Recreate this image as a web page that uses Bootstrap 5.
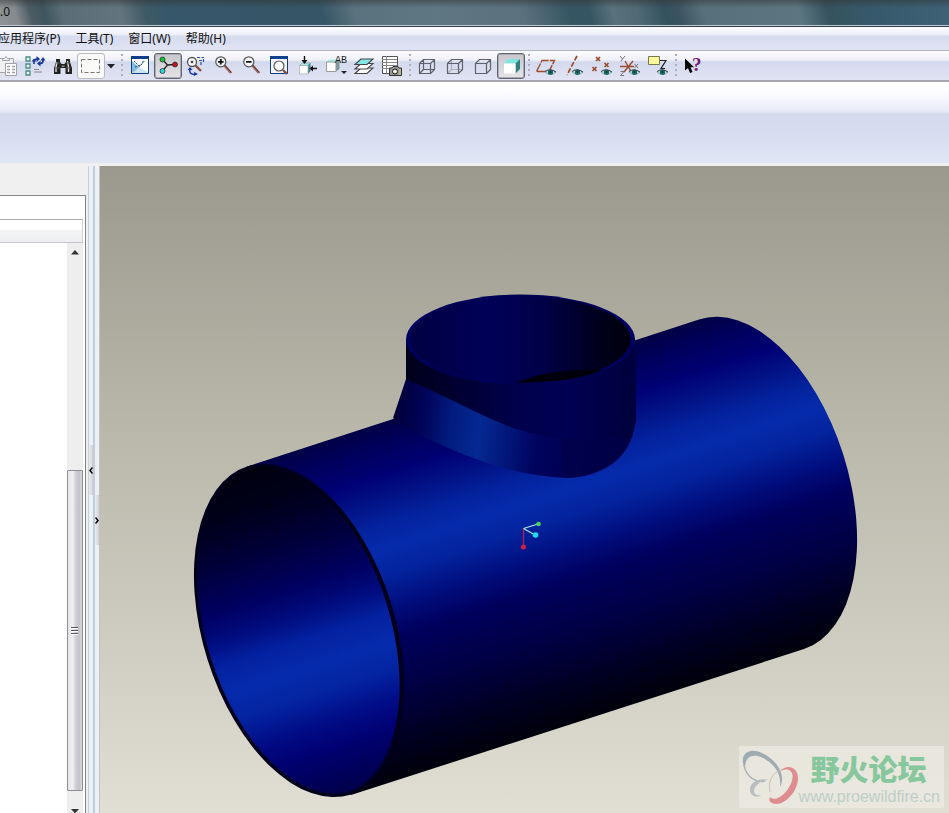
<!DOCTYPE html>
<html lang="zh-CN">
<head>
<meta charset="utf-8">
<meta name="viewport" content="width=device-width, initial-scale=1">
<title>Pro/ENGINEER Wildfire 5.0</title>
<link rel="stylesheet" href="https://cdn.jsdelivr.net/npm/bootstrap@5.3.0/dist/css/bootstrap.min.css">
<style>
body{font-family:"Noto Sans","Noto Sans CJK SC",sans-serif;font-size:12px;line-height:16px;color:#111;background:#f0f0f0}
.title-strip{height:27px;line-height:24px;border-bottom:1px solid #2c3c4c;box-shadow:inset 0 -1px #c4ccd4;
 background:linear-gradient(180deg,rgba(50,50,50,.5),transparent 30%),linear-gradient(75deg,#8f9396 0,#858a8e 2%,#4d5c64 3.500%,#3d555e 5%,#5a6e77 7%,#62757e 13%,#3f5a66 15.500%,#36566a 18%,#365566 34%,#5a727e 37.500%,#5f7783 46%,#5b717d 55%,#365562 60%,#365562 62%,#58717c 64.500%,#4f6a74 67%,#33515e 70%,#3c5560 71.500%,#57707b 74%,#5b7680 84%,#36535e 87%,#365a6c 92%,#3f6276 100%)}
.menu-strip{height:24px;border-bottom:1px solid #b2b4be;background:linear-gradient(180deg,#fdfdfe,#eceef7 8px,#d5dcee 9px,#e0e3f3)}
.menu-strip .nav{gap:1px}
.menu-strip .nav-link{padding:4px 7px;color:#111}
.menu-strip .nav-item:first-child{margin-left:-9px}
.tool-strip{height:31px;padding-top:2px;border-bottom:2px solid #a5a6ae;background:linear-gradient(180deg,#fcfcfe,#eff0f8 9px,#d3d9ed 11px,#e2e4f4)}
.tool-btn{width:28px;height:26px;padding:0;border:0;background:none;flex:none;display:block;overflow:hidden;border-radius:3px}
.tool-btn svg{display:block;width:28px;height:26px}
.tool-btn.cut-btn{width:21px;direction:rtl}
.tool-btn.pressed{border:1px solid #62646d;box-shadow:inset 0 0 0 1px #a9abb4;background:linear-gradient(#c8c8cc,#e4e4e8)}
.tool-btn.pressed svg,.tool-btn.boxed svg{margin:-1px}
.tool-btn.boxed{border:1px solid #bcbcc0;background:#fafaf8}
.caret-btn{width:12px}
.caret-btn svg{width:12px}
.grip-sep{width:2px;height:26px;margin:0 2px 0 3px;flex:none;background:linear-gradient(#a9aec2 2px,transparent 2px) 0 1px/2px 5px}
.first-sep{margin:0 3px 0 4px}
.dash-strip{height:81px;background:linear-gradient(180deg,#fff,#fbfbff 12px,#e9ebf6 28px,#e4e7f4 30px,#d4d9ed 32px,#d8def0 55px,#e1e6f5)}
.work-area{min-height:0;padding-top:3px}
.tree-pane{width:86px;margin-right:2px;padding-top:29px}
.tree-box{border-top:1px solid #858789;border-right:1px solid #7e8488;background:#fff;padding-right:2px}
.tree-filter{height:23px}
.tree-head{height:24px;border:1px solid #a9abae;border-left:0;border-right-color:#d0d2d4;border-bottom-color:#c4c5c8;background:linear-gradient(#fff 40%,#f3f4f5 50%,#eeeff1)}
.scroll-col{width:16px;background:#eee}
.scroll-btn{height:18px;padding:0;border:0;background:none;line-height:0}
.scroll-btn.end-btn{height:11px}
.scroll-thumb{flex:320 0 0;padding:0 2px 0 0;border:1px solid #8d8d92;border-radius:1px;background:linear-gradient(90deg,#e6e6e9,#f0f0f3 35%,#d0ced6 55%,#c4c2ca 80%,#dcdce0)}
.split-bar{width:7px;background:#ebf1f5;border-left:1px solid #c5d0da;border-right:2px solid #c3cdd7}
.split-end{width:5px;border:0;border-right:1px solid #c0c2c4}
.split-btn{height:50px;padding:0;border:0;background:linear-gradient(90deg,#eeeef0,#cfd0d6);line-height:0}
.model-view{min-width:0;background:linear-gradient(180deg,#9b998d,#b9b7aa 40%,#d2d0c4 78%,#e1dfd3)}
.forum-mark{right:5px;bottom:5px;height:62px;background:rgba(238,235,228,.7);padding:0 4px 0 2px}
.forum-name{font-family:"Noto Sans CJK SC",sans-serif;font-weight:900;font-size:29px;line-height:40px;color:#87c79d;padding-left:12px}
.forum-url{font-family:"Liberation Sans",sans-serif;font-size:16px;line-height:18px;color:#bccfc6}
</style>
<script src="https://cdn.jsdelivr.net/npm/bootstrap@5.3.0/dist/js/bootstrap.bundle.min.js"></script>
</head>
<body class="vh-100 overflow-hidden d-flex flex-column">
<svg width="0" height="0" class="position-absolute" aria-hidden="true">
 <symbol id="eye" viewBox="0 0 11 7"><path d="M0 3Q5 -1.500 11 3Q5.500 8 0 3Z" fill="#dfe9e9" stroke="#7c8f95" stroke-width=".8"/><circle cx="5.500" cy="3.300" r="2.700" fill="#177068"/><circle cx="5.500" cy="3" r="1" fill="#033"/><path d="M0 2.500Q5 -1 11 3" fill="none" stroke="#345"/></symbol>
</svg>
<header class="title-strip flex-shrink-0">.0</header>
<nav class="menu-strip flex-shrink-0">
 <ul class="nav flex-nowrap">
  <li class="nav-item"><a class="nav-link" href="#">应用程序(P)</a></li>
  <li class="nav-item"><a class="nav-link" href="#">工具(T)</a></li>
  <li class="nav-item"><a class="nav-link" href="#">窗口(W)</a></li>
  <li class="nav-item"><a class="nav-link" href="#">帮助(H)</a></li>
 </ul>
</nav>
<div class="tool-strip d-flex flex-shrink-0" role="toolbar" aria-label="工具栏">
 <button class="tool-btn cut-btn" aria-label="粘贴"><svg viewBox="0 0 28 26" fill="#f0f0f2" stroke="#a0a2a8"><path d="M5.500 5.500H20.500V19.500H5.500Z"/><path d="M9.500 7.500V5.500H11.500L13 3.500L14.500 5.500H16.500V7.500Z"/><path d="M12.500 10.500H23.500V22.500H12.500Z" fill="#fff"/><path d="M14 13.500H17M19 13.500H22M14 16.500H17M19 16.500H22M14 19.500H17M19 19.500H22" stroke-width="1.500"/></svg></button>
 <button class="tool-btn" aria-label="再生"><svg viewBox="0 0 28 26" fill="none"><path d="M5 4H9V8H5ZM5 11H9V15H5ZM5 18H9V22H5Z" fill="#e9f5f0" stroke="#4c8a80" stroke-width="1.300"/><path d="M13 11V8Q13.500 6 16 6M22 6V8.500Q21.500 10.500 19 10.500" stroke="#15379a" stroke-width="1.600"/><path d="M15.500 3L19 6L15.500 9ZM10.500 8.500H15.500L13 5.500ZM24.500 7.500H19.500L22 4ZM19.500 7.500V13.500L16 10.500Z" fill="#15379a"/><path d="M13 16.500H18M13 19H21" stroke="#888"/></svg></button>
 <button class="tool-btn" aria-label="查找"><svg viewBox="0 0 28 26"><path d="M7 6H11V9L12.500 11H15.500L17 9V6H21V9L23 15V21H16.500V15H11.500V21H5V15L7 9Z" fill="#222"/><path d="M8 9L7 14V19M18.500 8L19.500 14V19" fill="none" stroke="#ddd" stroke-width="1.400"/><path d="M12.500 12.500H15.500V14H12.500Z" fill="#888"/><path d="M7 10H11M17 10H21M5 15H11M17 15H22" stroke="#555"/></svg></button>
 <button class="tool-btn boxed" aria-label="选取框"><svg viewBox="0 0 28 26"><path d="M4.500 6.500H22.500V19.500H4.500Z" fill="none" stroke="#777" stroke-dasharray="4 2"/></svg></button>
 <button class="tool-btn caret-btn" aria-label="选取选项"><svg viewBox="0 0 12 26"><path d="M2 11H10L6 15.500Z" fill="#222"/></svg></button>
 <span class="grip-sep first-sep"></span>
 <button class="tool-btn" aria-label="草绘"><svg viewBox="0 0 28 26"><path d="M5.500 3.500H22.500V20.500H5.500Z" fill="#fff" stroke="#123f80"/><path d="M5 3H23V6H5Z" fill="#0d3f8c"/><path d="M6 8L13 14.500L6 20Z" fill="#80bde0"/><path d="M6 20L13 14L22 19V20Z" fill="#cae4f0"/><path d="M7 19.500L19 8" stroke="#9fb9c8"/><path d="M8 8L14 14M9 14L15 12L18 7" fill="none" stroke="#164b80" stroke-dasharray="2 1"/></svg></button>
 <button class="tool-btn pressed" aria-label="旋转中心"><svg viewBox="0 0 28 26"><path d="M8.500 6.500L13.500 12L21 11.500M13.500 12L8.500 18" fill="none" stroke="#222" stroke-width="1.300"/><g stroke="#222" stroke-width=".7"><circle cx="8.500" cy="6.500" r="2.500" fill="#16c33a"/><circle cx="21" cy="11.500" r="2.500" fill="#c5152b"/><circle cx="8.500" cy="18" r="2.500" fill="#2fd5dc"/></g></svg></button>
 <button class="tool-btn" aria-label="重定向"><svg viewBox="0 0 28 26" fill="none"><path d="M13.500 12.500L19 18" stroke="#8d4f42" stroke-width="2.400"/><circle cx="10" cy="9" r="4.500" fill="#f4f6fa" stroke="#555" stroke-width="1.300"/><circle cx="10" cy="9" r="1.300" fill="#444"/><path d="M15 4.500H22M21.500 6V9M17 7.500H20M19 9V13" stroke="#254b9e" stroke-width="1.200" stroke-dasharray="3 1.500"/><path d="M8 16Q6.500 21 12 21.500L14 20.500" stroke="#173ba0" stroke-width="1.600"/><path d="M8 14L10.500 17H5.500ZM12 19L16 21L12 23Z" fill="#173ba0"/></svg></button>
 <button class="tool-btn" aria-label="放大"><svg viewBox="0 0 28 26"><path d="M14 12L21 20" stroke="#a0645a" stroke-width="2.600"/><path d="M14.500 12L21.500 19.500" stroke="#333" stroke-width=".8"/><circle cx="10.800" cy="8.800" r="5" fill="#f6f7fa" stroke="#555" stroke-width="1.200"/><path d="M8 8.800H13.600M10.800 6V11.600" stroke="#111" stroke-width="1.800"/></svg></button>
 <button class="tool-btn" aria-label="缩小"><svg viewBox="0 0 28 26"><path d="M14 12L21 20" stroke="#a0645a" stroke-width="2.600"/><path d="M14.500 12L21.500 19.500" stroke="#333" stroke-width=".8"/><circle cx="10.800" cy="8.800" r="5" fill="#f6f7fa" stroke="#555" stroke-width="1.200"/><path d="M8 8.800H13.600" stroke="#111" stroke-width="1.800"/></svg></button>
 <button class="tool-btn" aria-label="重新调整"><svg viewBox="0 0 28 26"><path d="M4.500 4H21.500V20.500H4.500Z" fill="#f5f7fb" stroke="#123f80"/><path d="M4 3H22V6H4Z" fill="#0d3f8c"/><path d="M17 17L21 21" stroke="#8b4d42" stroke-width="2.400"/><circle cx="13" cy="13" r="5" fill="#fff" stroke="#555" stroke-width="1.200"/></svg></button>
 <button class="tool-btn" aria-label="视图定向"><svg viewBox="0 0 28 26"><path d="M5.500 12.500L8.500 10H16.500L14 12.500Z" fill="#a4ecec" stroke="#8aa"/><path d="M14 12.500L16.500 10V18L14 21Z" fill="#3f8588"/><path d="M5.500 12.500H14V21H5.500Z" fill="#fdfdfd" stroke="#aaa" stroke-width=".7"/><path d="M10.500 3V8M23 15.500H18" stroke="#111" stroke-width="1.400"/><path d="M7.500 7H13.500L10.500 11ZM19 12.500V18.500L15.500 15.500Z" fill="#111"/></svg></button>
 <button class="tool-btn" aria-label="已命名视图"><svg viewBox="0 0 28 26"><path d="M4.500 9L7.500 6.500H17.500L14 9Z" fill="#a4ecec"/><path d="M14 9L17.500 7V16L14 18.500Z" fill="#7b9999"/><path d="M4.500 9H14V18.500H4.500Z" fill="#fdfdfd" stroke="#999"/><text x="13" y="10" font-family="Liberation Mono,monospace" font-size="10" fill="#222">AB</text><path d="M19 18H25L22 21Z" fill="#222"/></svg></button>
 <button class="tool-btn" aria-label="层"><svg viewBox="0 0 28 26" stroke="#444" stroke-width="1.100"><path d="M5 20.500L11 15H23L17 20.500Z" fill="#fff"/><path d="M5 16L11 10.500H23L17 16Z" fill="#fff"/><path d="M5 11.500L11 6H23L17 11.500Z" fill="#83e7e7"/></svg></button>
 <button class="tool-btn" aria-label="视图管理器"><svg viewBox="0 0 28 26"><path d="M4.500 3.500H19.500V20.500H4.500Z" fill="#fff" stroke="#555"/><path d="M4 6.500H19M4 9.500H19M4 12.500H19M4 15.500H19M8.500 3V20" stroke="#888"/><path d="M11.500 15H14L15 13.500H20L21 15H23.500V22.500H11.500Z" fill="#999" stroke="#333"/><circle cx="17" cy="18.500" r="2.500" fill="#eee" stroke="#111"/><path d="M22 16V22" stroke="#ccc385" stroke-width="1.500"/></svg></button>
 <span class="grip-sep"></span>
 <button class="tool-btn" aria-label="线框"><svg viewBox="0 0 28 26" fill="none" stroke="#5f6268" stroke-width="1.200"><path d="M6.500 10.500H17.500V20.500H6.500ZM10.500 6.500H21.500V16.500H10.500ZM6.500 10.500L10.500 6.500M17.500 10.500L21.500 6.500M17.500 20.500L21.500 16.500M6.500 20.500L10.500 16.500"/></svg></button>
 <button class="tool-btn" aria-label="隐藏线"><svg viewBox="0 0 28 26" fill="none" stroke="#5f6268" stroke-width="1.200"><path d="M10.500 7V16.500H21M10.500 16.500L6.500 20.500" stroke="#adb0b8"/><path d="M6.500 10.500H17.500V20.500H6.500ZM6.500 10.500L10.500 6.500H21.500V16.500L17.500 20.500M17.500 10.500L21.500 6.500"/></svg></button>
 <button class="tool-btn" aria-label="消隐"><svg viewBox="0 0 28 26" fill="none" stroke="#5f6268" stroke-width="1.200"><path d="M6.500 10.500H17.500V20.500H6.500ZM6.500 10.500L10.500 6.500H21.500V16.500L17.500 20.500M17.500 10.500L21.500 6.500"/></svg></button>
 <button class="tool-btn pressed" aria-label="着色"><svg viewBox="0 0 28 26"><path d="M7 10.500L11 6H23L18.500 10.500Z" fill="#7fe5e2"/><path d="M18.500 10.500L23 6V16L18.500 20.500Z" fill="#2e8380"/><path d="M7 10.500H18.500V20.500H7Z" fill="#fff"/></svg></button>
 <span class="grip-sep"></span>
 <button class="tool-btn" aria-label="基准平面"><svg viewBox="0 0 28 26"><path d="M4.500 18.500L10 7.500H22.500L17 18.500Z" fill="none" stroke="#9b4b2b" stroke-width="1.400" stroke-dasharray="9 1"/><use href="#eye" x="13" y="16" width="11" height="7"/></svg></button>
 <button class="tool-btn" aria-label="基准轴"><svg viewBox="0 0 28 26"><path d="M17 3L7 22" stroke="#9b4b2b" stroke-width="1.700" stroke-dasharray="5 2"/><use href="#eye" x="12" y="16" width="11" height="7"/></svg></button>
 <button class="tool-btn" aria-label="基准点"><svg viewBox="0 0 28 26"><path d="M8 4L12 8M12 4L8 8M4.500 14L8.500 18M8.500 14L4.500 18M16.500 10L20.500 14M20.500 10L16.500 14" stroke="#9b4b2b" stroke-width="1.700"/><use href="#eye" x="13" y="16" width="11" height="7"/></svg></button>
 <button class="tool-btn" aria-label="坐标系"><svg viewBox="0 0 28 26" fill="none"><path d="M4 13.500H18M9 8L16 20M17 8L8 19" stroke="#9b4b2b" stroke-width="1.400"/><path d="M4 3L6.500 6L9 3M6.500 6L5 8.500M18.500 11L22 15M22 11L18.500 15M4.500 18.500H8L4.500 22.500H8" stroke="#777"/><use href="#eye" x="13" y="16" width="11" height="7"/></svg></button>
 <button class="tool-btn" aria-label="注释"><svg viewBox="0 0 28 26" fill="none"><path d="M4.500 3.500H15.500V11.500H4.500Z" fill="#fffb9c" stroke="#777752"/><path d="M16 7.500H22L17 15.500H21" stroke="#222" stroke-width="1.200"/><use href="#eye" x="13" y="16" width="11" height="7"/></svg></button>
 <span class="grip-sep"></span>
 <button class="tool-btn" aria-label="上下文帮助"><svg viewBox="0 0 28 26"><path d="M6 5.500V17.500L9 15L11 20L13.500 19L11.500 14.200H15Z" fill="#000"/><text x="13" y="18" font-family="Liberation Serif,serif" font-weight="bold" font-size="19" fill="#721b80">?</text></svg></button>
</div>
<div class="dash-strip flex-shrink-0"></div>
<main class="work-area d-flex flex-grow-1">
 <aside class="tree-pane d-flex flex-column flex-shrink-0">
  <div class="tree-box d-flex flex-column flex-grow-1">
   <div class="tree-filter flex-shrink-0"></div>
   <div class="tree-head flex-shrink-0"></div>
   <div class="d-flex flex-grow-1 justify-content-end">
    <div class="scroll-col d-flex flex-column">
     <button class="scroll-btn" aria-label="向上滚动"><svg width="8" height="5"><path d="M0 4.500L4 0L8 4.500Z" fill="#333"/></svg></button>
     <span style="flex:210 0 0"></span>
     <button class="scroll-thumb" aria-label="滚动条"><svg width="7" height="8"><path d="M0 .5H7M0 3.500H7M0 6.500H7" stroke="#55565c"/><path d="M0 1.500H7M0 4.500H7M0 7.500H7" stroke="#fff"/></svg></button>
     <span style="flex:11 0 0"></span>
     <button class="scroll-btn end-btn d-flex justify-content-center align-items-end" aria-label="向下滚动"><svg width="8" height="4"><path d="M0 0H8L4 4.500Z" fill="#333"/></svg></button>
    </div>
   </div>
  </div>
 </aside>
 <div class="split-bar d-flex flex-column flex-shrink-0">
  <span style="flex:279 0 0"></span>
  <button class="split-btn" aria-label="收起导航器"><svg width="4" height="7"><path d="M3.500 .5L1 3.500L3.500 6.500" fill="none" stroke="#000" stroke-width="1.500"/></svg></button>
  <span style="flex:318 0 0"></span>
 </div>
 <div class="split-bar split-end d-flex flex-column flex-shrink-0">
  <span style="flex:329 0 0"></span>
  <button class="split-btn" aria-label="展开浏览器"><svg width="4" height="7"><path d="M.5 .5L3 3.500L.5 6.500" fill="none" stroke="#000" stroke-width="1.500"/></svg></button>
  <span style="flex:268 0 0"></span>
 </div>
 <section class="model-view position-relative flex-grow-1 overflow-hidden">
  <svg class="d-block w-100 h-100" viewBox="100 166 849 647" role="img" aria-label="三通管模型">
   <defs>
    <linearGradient id="shell" gradientUnits="userSpaceOnUse" x1="246" y1="467" x2="352" y2="794">
     <stop offset="0" stop-color="#000046"/><stop offset=".06" stop-color="#00005c"/><stop offset=".14" stop-color="#000073"/><stop offset=".21" stop-color="#021286"/><stop offset=".28" stop-color="#04229d"/><stop offset=".35" stop-color="#052bac"/><stop offset=".43" stop-color="#04229c"/><stop offset=".51" stop-color="#010f80"/><stop offset=".6" stop-color="#00005e"/><stop offset=".75" stop-color="#000044"/><stop offset=".9" stop-color="#000020"/><stop offset="1" stop-color="#00000c"/>
    </linearGradient>
    <linearGradient id="bore" gradientUnits="userSpaceOnUse" x1="246" y1="467" x2="352" y2="794">
     <stop offset="0" stop-color="#00000e"/><stop offset=".12" stop-color="#00001a"/><stop offset=".25" stop-color="#00003a"/><stop offset=".38" stop-color="#000062"/><stop offset=".46" stop-color="#010d80"/><stop offset=".53" stop-color="#0421a0"/><stop offset=".61" stop-color="#052bac"/><stop offset=".69" stop-color="#0424a2"/><stop offset=".78" stop-color="#010c86"/><stop offset=".86" stop-color="#000070"/><stop offset="1" stop-color="#000048"/>
    </linearGradient>
    <linearGradient id="skirt" gradientUnits="userSpaceOnUse" x1="394" y1="410" x2="636" y2="440">
     <stop offset="0" stop-color="#000038"/><stop offset=".12" stop-color="#000358"/><stop offset=".24" stop-color="#021c80"/><stop offset=".36" stop-color="#042992"/><stop offset=".48" stop-color="#021679"/><stop offset=".6" stop-color="#00035e"/><stop offset=".8" stop-color="#00004a"/><stop offset="1" stop-color="#00003a"/>
    </linearGradient>
    <linearGradient id="neck"><stop offset="0" stop-color="#00001a"/><stop offset=".2" stop-color="#000030"/><stop offset=".5" stop-color="#00004e"/><stop offset=".7" stop-color="#000054"/><stop offset="1" stop-color="#00003c"/></linearGradient>
    <linearGradient id="mouth"><stop offset="0" stop-color="#000042"/><stop offset=".35" stop-color="#000058"/><stop offset=".6" stop-color="#000048"/><stop offset=".85" stop-color="#00001e"/><stop offset="1" stop-color="#00000c"/></linearGradient>
    <linearGradient id="rim"><stop offset="0" stop-color="#00005e"/><stop offset=".5" stop-color="#000052"/><stop offset="1" stop-color="#000062"/></linearGradient>
   </defs>
   <path d="M247 466.600L699 319.600A172 96 72.600 0 1 804 649L351 795Z" fill="url(#shell)"/>
   <ellipse cx="299" cy="630.500" rx="172" ry="96" transform="rotate(72.600 299 630.500)" fill="#00001c"/>
   <path d="M247.800 468.300A169.500 94 72.600 0 1 349.200 791.700A169.500 94 72.600 0 1 247.800 468.300Z" fill="url(#bore)"/>
   <path d="M406 379L393 418Q414 433 437 443Q470 458 503 468Q536 477 567 478Q598 476 617 460Q632 445 636 420V380Z" fill="url(#skirt)"/>
   <path d="M406 340V379Q422 386 437 393L470 409Q488 418 503 424Q540 440 590 440L632 438Q637 420 635 340Z" fill="url(#neck)"/>
   <path d="M560 438H632Q628 450 617 460Q598 477 567 478Z" fill="#00004b" opacity=".6"/>
   <ellipse cx="520.500" cy="339.500" rx="114.500" ry="45" fill="url(#rim)"/>
   <ellipse cx="520.500" cy="339.500" rx="110" ry="43.500" fill="url(#mouth)"/>
   <path d="M516 383Q545 369 602 369.500Q580 382 516 383Z" fill="#00000c"/>
   <path d="M523.500 528.500V546" stroke="#c6194c" stroke-width="1.200"/><path d="M523.500 528.500L538 524M523.500 528.500L535 535" stroke="#a7e6e5" stroke-width="1.200"/>
   <circle cx="538.500" cy="524" r="2.300" fill="#47d454"/><circle cx="535.500" cy="535" r="2.800" fill="#20dcf3"/><circle cx="523.500" cy="547" r="2.500" fill="#d21b46"/>
  </svg>
  <div class="forum-mark position-absolute d-flex align-items-center">
   <svg width="58" height="60" viewBox="0 0 58 60" aria-hidden="true">
    <path d="M4 22C-3 7 8 0 21 6C38 14 45 30 39 40C41 25 31 15 20 10C9 6 4 11 4 22Z" fill="#9eacb2"/>
    <path d="M3 18C5 30 15 36 24 34" fill="none" stroke="#a9b2b5" stroke-width="1.500"/>
    <path d="M28 33C17 30 8 36 9 44C10 50 17 51 20 48C13 49 11 44 15 39C18 35 24 33 28 33Z" fill="#b9bfc0"/>
    <path d="M39 24C47 16 57 21 57 31C57 46 41 61 31 56C28 55 28 52 29 50C34 55 42 49 47 42C53 33 53 25 48 23C45 22 42 23 39 24Z" fill="#de8c8f"/>
    <path d="M40 23C31 26 27 34 29 45" fill="none" stroke="#cfbdb9" stroke-width="1"/>
   </svg>
   <div><div class="forum-name">野火论坛</div><div class="forum-url">www.proewildfire.cn</div></div>
  </div>
 </section>
</main>
</body>
</html>
